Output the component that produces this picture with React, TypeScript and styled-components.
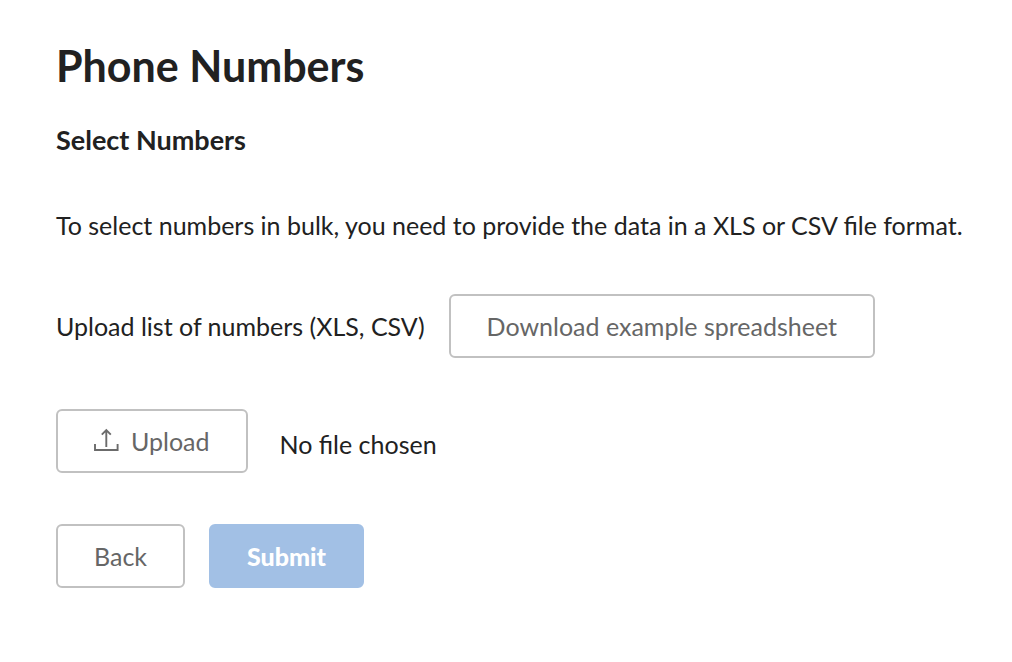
import React from "react";
import styled, { createGlobalStyle } from "styled-components";

const GlobalStyle = createGlobalStyle`
  *, *::before, *::after { box-sizing: border-box; }
  body {
    margin: 0;
    background: #fff;
    color: #212121;
    font-family: Lato, "Helvetica Neue", Arial, sans-serif;
    font-size: 25px;
    line-height: 38px;
    -webkit-font-smoothing: antialiased;
  }
`;

const Page = styled.main`
  padding: 40px 24px 40px 56px;
`;

const Title = styled.h1`
  margin: 0;
  font-size: 43px;
  line-height: 52px;
  font-weight: 700;
`;

const Subtitle = styled.h2`
  margin: 28px 0 0;
  font-size: 27px;
  line-height: 40px;
  font-weight: 700;
`;

const Text = styled.p`
  margin: 46px 0 50px;
`;

const Row = styled.div<{ $gap?: number }>`
  display: flex;
  flex-wrap: wrap;
  align-items: center;
  gap: ${(p) => p.$gap ?? 24}px;

  & + & {
    margin-top: 51px;
  }
`;

const FileName = styled.span`
  padding-top: 6px;
`;

const Button = styled.button<{ $primary?: boolean }>`
  display: inline-flex;
  align-items: center;
  gap: 12px;
  height: 64px;
  padding: 0 36px;
  border: 2px solid ${(p) => (p.$primary ? "#a2c0e5" : "#c1c1c1")};
  border-radius: 6px;
  background: ${(p) => (p.$primary ? "#a2c0e5" : "#fff")};
  color: ${(p) => (p.$primary ? "#fff" : "#666")};
  font: inherit;
  font-weight: ${(p) => (p.$primary ? 900 : 400)};
  cursor: pointer;
`;

const UploadIcon = () => (
  <svg width="25" height="26" viewBox="0 0 25 26" fill="none" stroke="#6b6b6b" strokeWidth="1.9" aria-hidden="true">
    <path d="M1 16v6h22.6v-6M12.3 19V2.5M7.8 6.6l4.5-4.5 4.5 4.5" />
  </svg>
);

export default function App() {
  return (
    <>
      <GlobalStyle />
      <Page>
        <Title>Phone Numbers</Title>
        <Subtitle>Select Numbers</Subtitle>
        <Text>To select numbers in bulk, you need to provide the data in a XLS or CSV file format.</Text>
        <Row>
          <span id="upload-label">Upload list of numbers (XLS, CSV)</span>
          <Button type="button">Download example spreadsheet</Button>
        </Row>
        <Row $gap={32}>
          <Button type="button" aria-describedby="upload-label">
            <UploadIcon />
            Upload
          </Button>
          <FileName>No file chosen</FileName>
        </Row>
        <Row>
          <Button type="button">Back</Button>
          <Button type="submit" $primary>Submit</Button>
        </Row>
      </Page>
    </>
  );
}
